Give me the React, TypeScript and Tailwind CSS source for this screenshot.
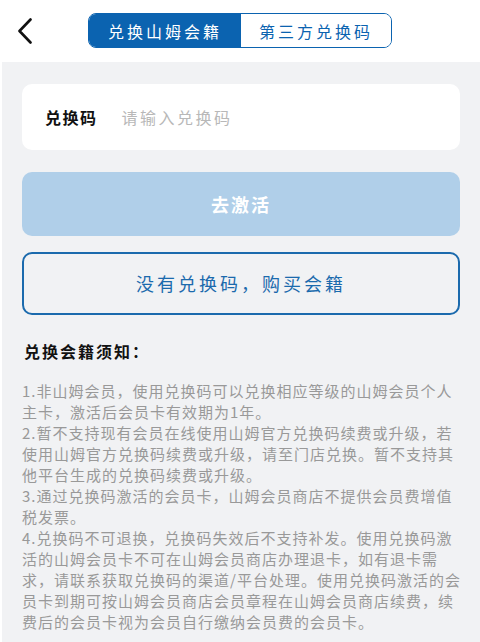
import React from "react";

const lines = [
  "1.非山姆会员，使用兑换码可以兑换相应等级的山姆会员个人",
  "主卡，激活后会员卡有效期为1年。",
  "2.暂不支持现有会员在线使用山姆官方兑换码续费或升级，若",
  "使用山姆官方兑换码续费或升级，请至门店兑换。暂不支持其",
  "他平台生成的兑换码续费或升级。",
  "3.通过兑换码激活的会员卡，山姆会员商店不提供会员费增值",
  "税发票。",
  "4.兑换码不可退换，兑换码失效后不支持补发。使用兑换码激",
  "活的山姆会员卡不可在山姆会员商店办理退卡，如有退卡需",
  "求，请联系获取兑换码的渠道/平台处理。使用兑换码激活的会",
  "员卡到期可按山姆会员商店会员章程在山姆会员商店续费，续",
  "费后的会员卡视为会员自行缴纳会员费的会员卡。",
];

export default function App() {
  return (
    <div
      className="w-[480px] h-[642px] overflow-hidden bg-white flex flex-col"
      style={{ fontFamily: '"Noto Sans CJK SC", "Noto Sans", sans-serif' }}
    >
      <div className="h-[62px] shrink-0 flex items-center relative">
        <div className="pl-[17px] w-[88px] flex items-center">
          <svg width="16" height="26" viewBox="0 0 16 26" fill="none">
            <path d="M13.5 1.5 L2.5 13 L13.5 24.5" stroke="#111" strokeWidth="2.6" strokeLinecap="round" strokeLinejoin="round" />
          </svg>
        </div>
        <div className="flex h-[35px] w-[304px] rounded-[8px] border-[1.5px] border-[#0b63b0] overflow-hidden -mt-[1px]">
          <div className="w-[152px] bg-[#0b63b0] text-white flex items-center justify-center text-[16px] tracking-[3px]">
            兑换山姆会籍
          </div>
          <div className="flex-1 bg-white text-[#0b63b0] flex items-center justify-center text-[16px] tracking-[3px]">
            第三方兑换码
          </div>
        </div>
      </div>
      <div className="flex-1 bg-[#f1f2f4] ml-[2px] px-[20px] pt-[22px]">
        <div className="h-[66px] bg-white rounded-[10px] flex items-center pl-[23px]">
          <span className="text-[16px] font-bold text-[#111] tracking-[1.5px]">兑换码</span>
          <span className="ml-[24px] text-[16px] text-[#b8b8b8] tracking-[2.5px]">请输入兑换码</span>
        </div>
        <div className="mt-[22px] h-[64px] bg-[#b0cfe9] rounded-[10px] flex items-center justify-center text-white text-[18px] font-bold tracking-[2px]">
          去激活
        </div>
        <div className="mt-[16px] h-[63px] border-2 border-[#1b6aad] rounded-[10px] flex items-center justify-center text-[#1b6aad] text-[18px] tracking-[3px]">
          没有兑换码，购买会籍
        </div>
        <div className="mt-[24px] text-[16px] font-bold text-[#111] tracking-[2px] pl-[2px]">
          兑换会籍须知：
        </div>
        <div className="mt-[17px] text-[15px] leading-[21px] text-[#999999] tracking-[1px]">
          {lines.map((l, i) => (
            <div key={i} className="whitespace-nowrap">{l}</div>
          ))}
        </div>
      </div>
    </div>
  );
}
